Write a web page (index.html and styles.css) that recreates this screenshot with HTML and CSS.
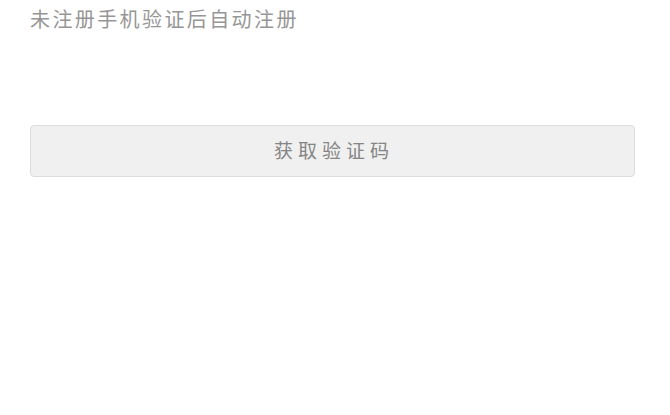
FILE: index.html
```html
<!DOCTYPE html>
<html lang="zh-CN">
<head>
    <meta charset="UTF-8">
    <meta name="viewport" content="width=device-width, initial-scale=1.0">
    <title>手机验证</title>
    <link rel="stylesheet" href="styles.css">
</head>
<body>
    <div class="login-form">
        <p class="hint">未注册手机验证后自动注册</p>
        <button class="btn-code" disabled>获取验证码</button>
    </div>
</body>
</html>
```

FILE: styles.css
```css
body { margin: 0; background: #fff; font-family: "Noto Sans CJK SC", "Noto Sans", sans-serif; }
.login-form { padding: 5px 30px 0 30px; }
.hint { margin: 0; font-size: 20px; line-height: 28px; letter-spacing: 2.4px; color: #969696; }
.btn-code {
    display: block;
    width: 605px;
    height: 52px;
    margin-top: 92px;
    padding: 0 0 3px 3px;
    background-color: #f0f0f0;
    border: 1px solid #dcdcdc;
    border-radius: 4px;
    font-family: inherit;
    font-size: 19px;
    letter-spacing: 5px;
    color: #858585;
}
```
